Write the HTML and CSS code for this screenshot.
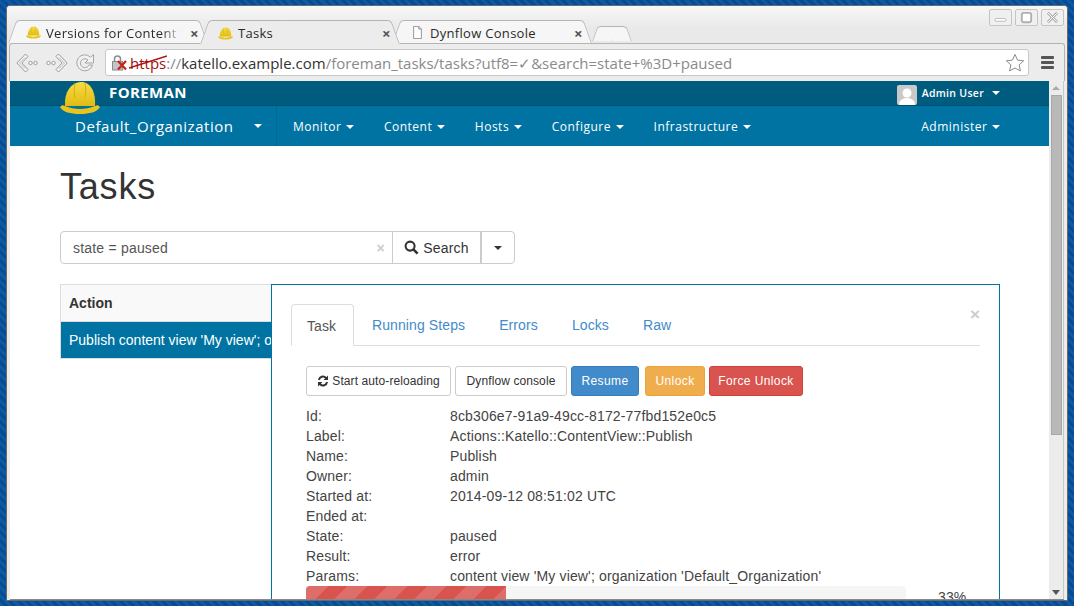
FILE: index.html
```html
<!DOCTYPE html>
<html lang="en">
<head>
<meta charset="UTF-8" />
<title>Tasks</title>
<link rel="stylesheet" href="styles.css">
</head>
<body>
<svg class="defs" width="0" height="0">
  <defs>
    <linearGradient id="hatFill" x1="0" y1="0" x2="0" y2="1">
      <stop offset="0" stop-color="#f5dc45"/>
      <stop offset="1" stop-color="#e2bb12"/>
    </linearGradient>
    <symbol id="hat" viewBox="0 0 40 34">
      <path d="M5 25C4 11 11 2 20 1c10-1 16 9 15 24z" fill="url(#hatFill)"/>
      <path d="M15 2c-1 6-1 10 0 15M25 2c1 5 1 9 0 14" fill="none" stroke="#d4ad10" stroke-width="1"/>
      <path d="M0 26c2-2 3-2 5-1 9 4 21 4 30 0 2-1 3-1 5 1-3 5-10 7-20 7S3 31 0 26z" fill="#e8c41c"/>
    </symbol>
  </defs>
</svg>

<div class="window">
  <div class="titlebar">
    <div class="tabs">
      <div class="tab">
        <svg class="favicon"><use href="#hat"/></svg>
        <span class="tab-title fade">Versions for Content View</span>
        <span class="tab-close">×</span>
      </div>
      <div class="tab active">
        <svg class="favicon"><use href="#hat"/></svg>
        <span class="tab-title">Tasks</span>
        <span class="tab-close">×</span>
      </div>
      <div class="tab">
        <svg class="favicon" viewBox="0 0 12 15">
          <path d="M1.5.5h6l3 3v11h-9z M7.5.5v3h3" fill="#fff" stroke="#8a8a8a"/>
        </svg>
        <span class="tab-title">Dynflow Console</span>
        <span class="tab-close">×</span>
      </div>
      <div class="tab new-tab"></div>
    </div>
    <div class="win-buttons">
      <div class="win-btn"><svg viewBox="0 0 22 16"><rect x="5" y="9" width="12" height="3" rx="1.5" fill="#fff" stroke="#b8b8b8"/></svg></div>
      <div class="win-btn"><svg viewBox="0 0 22 16"><rect x="6" y="3" width="10" height="10" rx="2" fill="#fff" stroke="#b0b0b0" stroke-width="2"/></svg></div>
      <div class="win-btn"><svg viewBox="0 0 22 16"><path d="M6 3l10 10M16 3L6 13" stroke="#b0b0b0" stroke-width="3"/><path d="M6 3l10 10M16 3L6 13" stroke="#fff" stroke-width="1"/></svg></div>
    </div>
  </div>

  <div class="toolbar">
    <svg class="tool-icon back" viewBox="0 0 22 20">
      <path d="M9.500 1L.8 10l8.700 9 2.500-2.500L5.800 10 12 3.500z" fill="#f4f4f4" stroke="#9a9a9a"/>
      <path d="M9 4.500L3.500 10 9 15.500" fill="none" stroke="#bdbdbd"/>
      <circle cx="14.500" cy="10" r="1.700" fill="#fff" stroke="#9a9a9a"/>
      <circle cx="19.500" cy="10" r="1.700" fill="#fff" stroke="#9a9a9a"/>
    </svg>
    <svg class="tool-icon fwd" viewBox="0 0 22 20">
      <path d="M12.500 1l8.700 9-8.700 9-2.500-2.500 6.200-6.500L10 3.500z" fill="#f4f4f4" stroke="#9a9a9a"/>
      <path d="M13 4.500l5.500 5.500-5.500 5.500" fill="none" stroke="#bdbdbd"/>
      <circle cx="7.500" cy="10" r="1.700" fill="#fff" stroke="#9a9a9a"/>
      <circle cx="2.500" cy="10" r="1.700" fill="#fff" stroke="#9a9a9a"/>
    </svg>
    <svg class="tool-icon reload" viewBox="0 0 20 20">
      <path d="M17.500 12A8 8 0 1 1 15.600 4.300L18.500 1.500v8.500H10l3-3A4.500 4.500 0 1 0 14 12z" fill="#f2f2f2" stroke="#a4a4a4"/>
    </svg>
    <div class="omnibox">
      <svg class="lock" viewBox="0 0 18 16">
        <rect x=".5" y="6.500" width="10" height="8.500" fill="#c4c4c4" stroke="#8c8c8c"/>
        <path d="M2.500 6.500V4a3 3 0 0 1 6 0v2.500" fill="none" stroke="#8c8c8c" stroke-width="1.500"/>
        <path d="M6 6l8 8.500M14 6l-8 8.500" stroke="#c8201a" stroke-width="2.200"/>
      </svg>
      <span class="scheme">https<svg class="strike" viewBox="0 0 38 14"><path d="M0 13L38 1" stroke="#b01010" stroke-width="1.400"/></svg></span><span class="faded">://</span><span class="host">katello.example.com</span><span class="faded">/foreman_tasks/tasks?utf8=✓&amp;search=state+%3D+paused</span>
      <svg class="star" viewBox="0 0 20 20">
        <path d="M10 1.500l2.600 5.600 6 .7-4.500 4.100 1.300 6L10 15l-5.400 2.900 1.300-6L1.400 7.800l6-.7z" fill="#fff" stroke="#8a8a8a"/>
      </svg>
    </div>
    <div class="hamburger"><i></i><i></i><i></i></div>
  </div>

  <div class="viewport">
    <div class="page">
      <div class="top-bar">
        <div class="brand">
          <svg class="brand-hat"><use href="#hat"/></svg>
          <span>FOREMAN</span>
        </div>
        <div class="user">
          <svg class="avatar" viewBox="0 0 20 20">
            <rect width="20" height="20" rx="2" fill="#c9c9c9"/>
            <circle cx="10" cy="8" r="4.500" fill="#fff"/>
            <path d="M2 20c0-5 4-7 8-7s8 2 8 7z" fill="#fff"/>
          </svg>
          <span>Admin User</span>
          <b class="caret"></b>
        </div>
      </div>
      <nav class="main-nav">
        <a class="org">Default_Organization<b class="caret"></b></a>
        <div class="nav-items">
          <a>Monitor <b class="caret"></b></a>
          <a>Content <b class="caret"></b></a>
          <a>Hosts <b class="caret"></b></a>
          <a>Configure <b class="caret"></b></a>
          <a>Infrastructure <b class="caret"></b></a>
        </div>
        <a class="admin">Administer <b class="caret"></b></a>
      </nav>

      <main>
        <h1>Tasks</h1>
        <div class="search">
          <div class="search-input">state = paused <span class="clear">×</span></div>
          <div class="search-btn">
            <svg viewBox="0 0 16 16"><circle cx="6.500" cy="6.500" r="4.800" fill="none" stroke="#333" stroke-width="2.200"/><path d="M10 10l4.500 4.500" stroke="#333" stroke-width="2.800"/></svg>
            Search
          </div>
          <div class="search-drop"><b class="caret"></b></div>
        </div>
        <table class="tasks">
          <tr><th>Action</th></tr>
          <tr class="selected"><td>Publish content view 'My view'; organization 'Default_Organization'</td></tr>
        </table>
      </main>

      <div class="modal">
        <span class="modal-close">×</span>
        <ul class="modal-tabs">
          <li class="current">Task</li>
          <li>Running Steps</li>
          <li>Errors</li>
          <li>Locks</li>
          <li>Raw</li>
        </ul>
        <div class="actions">
          <a class="btn">
            <svg viewBox="1 1 12 12"><path d="M2 6a5 5 0 0 1 8.500-3L12 1.500V6H7.500l1.600-1.600A3 3 0 0 0 4 6zM12 8a5 5 0 0 1-8.500 3L2 12.500V8h4.500l-1.600 1.600A3 3 0 0 0 10 8z" fill="#333"/></svg>
            Start auto-reloading
          </a>
          <a class="btn">Dynflow console</a>
          <a class="btn blue">Resume</a>
          <a class="btn orange">Unlock</a>
          <a class="btn red">Force Unlock</a>
        </div>
        <dl class="details">
          <dt>Id:</dt><dd>8cb306e7-91a9-49cc-8172-77fbd152e0c5</dd>
          <dt>Label:</dt><dd>Actions::Katello::ContentView::Publish</dd>
          <dt>Name:</dt><dd>Publish</dd>
          <dt>Owner:</dt><dd>admin</dd>
          <dt>Started at:</dt><dd>2014-09-12 08:51:02 UTC</dd>
          <dt>Ended at:</dt><dd></dd>
          <dt>State:</dt><dd>paused</dd>
          <dt>Result:</dt><dd>error</dd>
          <dt>Params:</dt><dd>content view 'My view'; organization 'Default_Organization'</dd>
        </dl>
        <div class="progress-row">
          <div class="progress"><div class="progress-bar" style="width:33.3%"></div></div>
          <span class="percent">33%</span>
        </div>
      </div>
    </div>

    <div class="scrollbar">
      <span class="arrow up"></span>
      <div class="thumb"></div>
      <span class="arrow down"></span>
    </div>
  </div>
</div>
</body>
</html>
```
FILE: styles.css
```css
/* Desktop behind the browser window */
html, body {
  margin: 0;
  height: 100%;
}
body {
  box-sizing: border-box;
  width: 1074px;
  height: 606px;
  overflow: hidden;
  padding: 5px 6px 5px 6px;
  background: repeating-linear-gradient(45deg, #0b5aa6 0 3px, #0a4a90 3px 6px);
  font-family: "Liberation Sans", Arial, sans-serif;
  color: #333;
}
.defs {
  position: absolute;
}

/* Browser window */
.window {
  height: 100%;
  display: flex;
  flex-direction: column;
  background: #ececec;
  border: 1px solid #6a6a6a;
  border-radius: 4px 4px 0 0;
  box-sizing: border-box;
  overflow: hidden;
}
.titlebar {
  position: relative;
  z-index: 1;
  height: 37px;
  display: flex;
  justify-content: space-between;
  padding: 14px 3px 0 2px;
  box-sizing: border-box;
  background: linear-gradient(#f7f7f7, #e9e9e9 60%);
  flex: none;
}
.tabs {
  display: flex;
  padding-left: 3px;
}
.tab {
  position: relative;
  z-index: 1;
  width: 192px;
  height: 23px;
  box-sizing: border-box;
  display: flex;
  align-items: center;
  padding: 2px 5px 0 14px;
  font: 13px "Open Sans", sans-serif;
  color: #2a2a2a;
  letter-spacing: .3px;
}
.tab::before,
.tab::after {
  content: "";
  position: absolute;
  top: 0;
  bottom: 0;
  width: 55%;
  background: #f6f6f6;
  border-top: 1px solid #b4b4b4;
  z-index: 0;
  transform-origin: bottom;
}
.tab::before {
  left: -4px;
  border-left: 1px solid #b4b4b4;
  border-radius: 4px 0 0 0;
  transform: skewX(-20deg);
}
.tab::after {
  right: -4px;
  border-right: 1px solid #b4b4b4;
  border-radius: 0 4px 0 0;
  transform: skewX(20deg);
}
.tab.active {
  z-index: 2;
  height: 24px;
}
.tab.active::before,
.tab.active::after {
  background: #ececec;
}
.tab > * {
  position: relative;
  z-index: 1;
}
.tab.new-tab {
  width: 32px;
  height: 15px;
  margin: 6px 0 0 8px;
  padding: 0;
}
.favicon {
  width: 15px;
  height: 13px;
  flex: none;
  margin-right: 5px;
}
.tab-title {
  flex: 1;
  white-space: nowrap;
  overflow: hidden;
}
.tab-title.fade {
  -webkit-mask-image: linear-gradient(to right, #000 85%, transparent);
  mask-image: linear-gradient(to right, #000 85%, transparent);
}
.tab-close {
  font-size: 15px;
  font-weight: 700;
  color: #555;
  margin-left: 8px;
}
.win-buttons {
  display: flex;
  gap: 3px;
  margin-top: -11px;
}
.win-btn {
  width: 23px;
  height: 17px;
  border: 1px solid #c4c4c4;
  border-radius: 2px;
  box-sizing: border-box;
  background: #f0f0f0;
}
.win-btn svg {
  display: block;
  width: 100%;
  height: 100%;
}

/* Toolbar with the address box */
.toolbar {
  height: 38px;
  flex: none;
  display: flex;
  align-items: center;
  box-sizing: border-box;
  margin: 0 2px;
  padding: 0 10px 0 6px;
  background: #ececec;
  border-top: 1px solid #b4b4b4;
  border-left: 1px solid #b4b4b4;
  border-right: 1px solid #b4b4b4;
  border-radius: 3px 3px 0 0;
}
.tool-icon {
  flex: none;
  height: 20px;
}
.back { width: 22px; margin-right: 8px; }
.fwd { width: 22px; margin-right: 7px; }
.reload { width: 20px; margin-right: 10px; }
.omnibox {
  flex: 1;
  height: 27px;
  display: flex;
  align-items: center;
  box-sizing: border-box;
  padding: 0 3px 0 6px;
  background: #fff;
  border: 1px solid #c8c8c8;
  border-radius: 3px;
  font: 15px "Open Sans", sans-serif;
  white-space: nowrap;
  position: relative;
}
.lock {
  width: 18px;
  height: 16px;
  flex: none;
}
.scheme {
  color: #a01010;
  position: relative;
}
.strike {
  position: absolute;
  left: -1px;
  top: 2px;
  width: 38px;
  height: 14px;
}
.faded { color: #8a8a8a; }
.host { color: #333; }
.star {
  width: 20px;
  height: 20px;
  margin-left: auto;
  flex: none;
}
.hamburger {
  margin-left: 12px;
  width: 13px;
  display: flex;
  flex-direction: column;
  gap: 2px;
  flex: none;
}
.hamburger i {
  display: block;
  height: 3px;
  background: #555;
  border-radius: 1px;
}

/* Page inside the browser */
.viewport {
  flex: 1;
  min-height: 0;
  display: flex;
  margin: 0 3px 0 3px;
  border-bottom: 1px solid #888;
}
.page {
  position: relative;
  flex: 1;
  overflow: hidden;
  background: #fff;
}
.top-bar {
  height: 25px;
  background: #005c7f;
  border-bottom: 1px solid #004f6e;
  box-sizing: border-box;
  display: flex;
  justify-content: space-between;
  color: #fff;
}
.caret {
  display: inline-block;
  width: 0;
  height: 0;
  vertical-align: middle;
  border-top: 4px solid currentColor;
  border-left: 4px solid transparent;
  border-right: 4px solid transparent;
}
.brand {
  display: flex;
  align-items: center;
  padding-left: 50px;
  font: 700 15px "Open Sans", sans-serif;
  letter-spacing: .4px;
  height: 25px;
}
.brand span {
  margin: -4px 0 0 9px;
}
.brand-hat {
  width: 40px;
  height: 34px;
  margin-top: 9px;
  position: relative;
  z-index: 2;
}
.user {
  display: flex;
  align-items: center;
  padding-right: 49px;
  font: 600 10.500px "Open Sans", sans-serif;
  letter-spacing: .3px;
}
.user span {
  margin: 0 8px 0 5px;
}
.avatar {
  width: 20px;
  height: 20px;
  margin-top: 3px;
}
.main-nav {
  height: 40px;
  background: #0073a3;
  color: #fff;
  display: flex;
  align-items: center;
  font: 12px "Open Sans", sans-serif;
  letter-spacing: .5px;
  padding-right: 49px;
}
.main-nav .caret {
  margin-left: 1px;
}
.org {
  box-sizing: border-box;
  width: 267px;
  height: 40px;
  padding-left: 65px;
  display: flex;
  align-items: center;
  font-size: 15px;
  letter-spacing: .55px;
  border-right: 1px solid #00688f;
  white-space: pre;
}
.org .caret {
  margin-left: 20px;
}
.nav-items {
  display: flex;
  gap: 30px;
  padding-left: 16px;
}
.admin {
  margin-left: auto;
}

main {
  padding: 0 49px 0 50px;
}
h1 {
  margin: 0;
  padding: 21px 0 24px;
  font: 400 36px/40px "Liberation Sans", sans-serif;
  letter-spacing: .8px;
  color: #333;
}
.search {
  display: flex;
  height: 33px;
  width: 455px;
  font-size: 14px;
  letter-spacing: .2px;
  color: #555;
}
.search > div {
  display: flex;
  align-items: center;
  box-sizing: border-box;
  border: 1px solid #ccc;
}
.search-input {
  width: 333px;
  padding: 0 12px;
  border-radius: 4px 0 0 4px;
  justify-content: space-between;
  color: #555;
}
.clear {
  font-weight: 700;
  font-size: 14px;
  color: #ccc;
  margin-right: -5px;
}
.search-btn {
  width: 90px;
  margin-left: -1px;
  justify-content: center;
  gap: 4px;
  color: #333;
  border-right-width: 2px !important;
}
.search-btn svg {
  width: 15px;
  height: 15px;
}
.search-drop {
  width: 34px;
  justify-content: center;
  margin-left: -1px;
  border-radius: 0 4px 4px 0;
  color: #333;
}
.tasks {
  margin-top: 20px;
  width: 100%;
  border-collapse: collapse;
  font-size: 14px;
}
.tasks th,
.tasks td {
  height: 36px;
  padding: 0 8px;
  text-align: left;
  border: 1px solid #ddd;
  white-space: nowrap;
}
.tasks th {
  background: #f9f9f9;
}
.selected td {
  background: #0073a3;
  color: #fff;
}

/* Task details popup */
.modal {
  position: absolute;
  left: 261px;
  top: 203px;
  width: 729px;
  height: 400px;
  box-sizing: border-box;
  padding: 19px 19px;
  background: #fff;
  border: 1px solid #0073a3;
  font-size: 14px;
  letter-spacing: .15px;
  color: #444;
}
.modal-close {
  position: absolute;
  top: 20px;
  right: 19px;
  font-size: 17px;
  line-height: 20px;
  font-weight: 700;
  color: #ccc;
}
.modal-tabs {
  list-style: none;
  margin: 0;
  padding: 0;
  display: flex;
  height: 42px;
  box-sizing: border-box;
  border-bottom: 1px solid #ddd;
  font-size: 14px;
  letter-spacing: .1px;
  color: #428bca;
}
.modal-tabs li {
  height: 42px;
  box-sizing: border-box;
  padding: 13px 17px 0;
  white-space: nowrap;
}
.modal-tabs .current {
  width: 63px;
  color: #555;
  background: #fff;
  border: 1px solid #ddd;
  border-bottom-color: #fff;
  border-radius: 4px 4px 0 0;
  padding-left: 15px;
  margin-right: 1px;
}
.actions {
  display: flex;
  gap: 4px;
  margin: 20px 0 0 15px;
}
.btn {
  display: flex;
  align-items: center;
  justify-content: center;
  gap: 3px;
  height: 30px;
  box-sizing: border-box;
  border: 1px solid #ccc;
  border-radius: 3px;
  font-size: 12px;
  letter-spacing: .1px;
  color: #333;
  white-space: nowrap;
}
.btn:nth-child(1) { width: 145px; }
.btn:nth-child(2) { width: 112px; }
.btn svg {
  width: 12px;
  height: 12px;
}
.blue { width: 68px; background: #428bca; border-color: #357ebd; color: #fff; letter-spacing: .4px; }
.orange { width: 60px; margin-left: 2px; background: #f0ad4e; border-color: #eea236; color: #fff; letter-spacing: .4px; }
.red { width: 94px; background: #d9534f; border-color: #d43f3a; color: #fff; letter-spacing: .4px; }
.details {
  display: grid;
  grid-template-columns: 144px 1fr;
  grid-auto-rows: 20px;
  align-items: center;
  margin: 10px 0 0 15px;
}
.details dt, .details dd {
  margin: 0;
  white-space: nowrap;
}
.progress-row {
  display: flex;
  margin: 0 0 0 15px;
}
.progress {
  width: 600px;
  height: 20px;
  background: #f5f5f5;
  border-radius: 4px;
  overflow: hidden;
}
.progress-bar {
  height: 100%;
  background-color: #d9534f;
  background-image: repeating-linear-gradient(-45deg, rgba(255,255,255,.15) 0 14px, transparent 14px 28px);
}
.percent {
  margin: 3px 0 0 32px;
}

/* Scrollbar */
.scrollbar {
  width: 15px;
  flex: none;
  display: flex;
  flex-direction: column;
  align-items: center;
  background: #ececec;
  border-right: 1px solid #c8c8c8;
  box-sizing: border-box;
}
.thumb {
  width: 11px;
  height: 340px;
  background: #b9b9b9;
  border: 1px solid #a8a8a8;
  box-sizing: border-box;
  margin-top: 5px;
}
.arrow {
  width: 0;
  height: 0;
  border-left: 4px solid transparent;
  border-right: 4px solid transparent;
}
.arrow.up {
  margin-top: 5px;
  border-bottom: 4px solid #aaa;
}
.arrow.down {
  margin-top: auto;
  margin-bottom: 4px;
  border-top: 5px solid #555;
}
```
